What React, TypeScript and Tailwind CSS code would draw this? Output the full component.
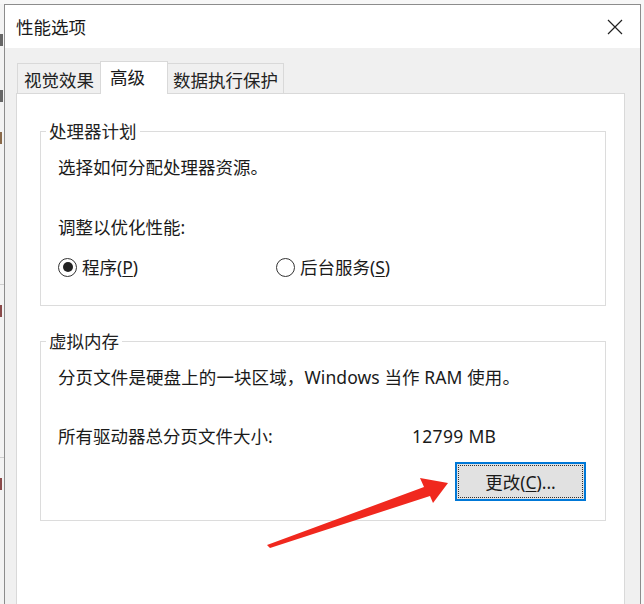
const font = "font-['Noto_Sans','Noto_Sans_CJK_SC',sans-serif]"

function Radio({ checked, label, hotkey, className = '' }: { checked?: boolean; label: string; hotkey: string; className?: string }) {
  return (
    <div className={`flex items-center ${className}`}>
      <span className="flex h-[19px] w-[19px] items-center justify-center rounded-full border border-[#333] bg-white">
        {checked && <span className="h-[10px] w-[10px] rounded-full bg-[#222]" />}
      </span>
      <span className="ml-[5px]">
        {label}(<span className="underline underline-offset-2">{hotkey}</span>)
      </span>
    </div>
  )
}

function GroupBox({ title, className = '', children }: { title: string; className?: string; children: React.ReactNode }) {
  return (
    <div className={`relative ml-[23px] w-[566px] shrink-0 border border-[#dcdcdc] pl-[17px] pt-[23px] ${className}`}>
      <span className="absolute -top-[13px] left-[5px] bg-white px-[3px] leading-[24px] text-[#222]">{title}</span>
      {children}
    </div>
  )
}

export default function App() {
  return (
    <div className={`relative flex h-[604px] w-[644px] items-start overflow-hidden bg-[#f7f7f7] pt-[4px] text-[17.5px] leading-[24px] text-[#1a1a1a] ${font}`}>
      {/* background window edge */}
      <div className="flex w-[4px] shrink-0 flex-col self-stretch bg-[#f3f3f3]">
        <span className="mt-[30px] h-[12px] w-[3px] shrink-0 bg-[#666]" />
        <span className="mt-[44px] h-[12px] w-[3px] shrink-0 bg-[#666]" />
        <span className="mt-[30px] h-[12px] w-[2px] shrink-0 bg-[#8a6a4a]" />
        <span className="mt-[140px] h-px w-[4px] shrink-0 bg-[#cfcfcf]" />
        <span className="mt-[20px] h-[12px] w-[2px] shrink-0 bg-[#8a4a4a]" />
        <span className="mt-[140px] h-px w-[4px] shrink-0 bg-[#cfcfcf]" />
        <span className="mt-[20px] h-[12px] w-[2px] shrink-0 bg-[#8a4a4a]" />
      </div>

      {/* dialog */}
      <div className="flex w-[637px] shrink-0 flex-col border-l border-r border-t border-[#8c8c8c] bg-[#f0f0f0]">
        <div className="flex h-[43px] shrink-0 items-center justify-between bg-white pl-[11px] pr-[17px]">
          <span className="pt-[1px] text-[#1a1a1a]">性能选项</span>
          <svg width="16" height="16" viewBox="0 0 16 16" className="mt-[1px]">
            <path d="M1 1 L15 15 M15 1 L1 15" stroke="#222" strokeWidth="1.2" />
          </svg>
        </div>

        <div className="flex shrink-0 flex-col pl-[11px] pt-[13px]">
          {/* tabs */}
          <div className="flex shrink-0 items-end pl-[1px]">
            <div className="flex h-[30px] w-[83px] items-center justify-center border-l border-t border-[#d9d9d9] pt-[2px] text-[#222]">
              视觉效果
            </div>
            <div className="relative z-10 -mb-px flex h-[33px] w-[68px] items-start border-l border-r border-t border-[#d9d9d9] bg-white pl-[9px] pt-[3px]">
              高级
            </div>
            <div className="flex h-[30px] w-[116px] items-center justify-center border-r border-t border-[#d9d9d9] pt-[2px] text-[#222]">
              数据执行保护
            </div>
          </div>

          {/* panel */}
          <div className="flex h-[530px] w-[609px] shrink-0 flex-col border border-[#d9d9d9] bg-white pt-[37px]">
            <GroupBox title="处理器计划" className="h-[175px]">
              <p>选择如何分配处理器资源。</p>
              <p className="mt-[36px]">调整以优化性能:</p>
              <div className="mt-[16px] flex">
                <Radio checked label="程序" hotkey="P" className="w-[218px]" />
                <Radio label="后台服务" hotkey="S" />
              </div>
            </GroupBox>

            <GroupBox title="虚拟内存" className="mt-[35px] h-[180px]">
              <p className="tracking-[0.1px]">分页文件是硬盘上的一块区域，Windows 当作 RAM 使用。</p>
              <div className="mt-[35px] flex">
                <span className="w-[354px]">所有驱动器总分页文件大小:</span>
                <span className="tracking-[0.3px]">12799 MB</span>
              </div>
              <div className="mt-[14px] flex justify-end pr-[19px]">
                <button className="flex h-[39px] w-[131px] items-center justify-center border-2 border-[#0078d7] bg-[#e1e1e1] p-[1px]">
                  <span className="flex h-full w-full items-center justify-center border border-dotted border-[#333]">
                    更改(<span className="underline underline-offset-2">C</span>)...
                  </span>
                </button>
              </div>
            </GroupBox>
          </div>
        </div>
      </div>

      {/* annotation arrow */}
      <svg className="pointer-events-none absolute left-0 top-0" width="644" height="604">
        <polygon
          points="267,545 424,487 420,478 448,483 433,503 430,496 270,548"
          fill="#f0281e"
        />
      </svg>
    </div>
  )
}
